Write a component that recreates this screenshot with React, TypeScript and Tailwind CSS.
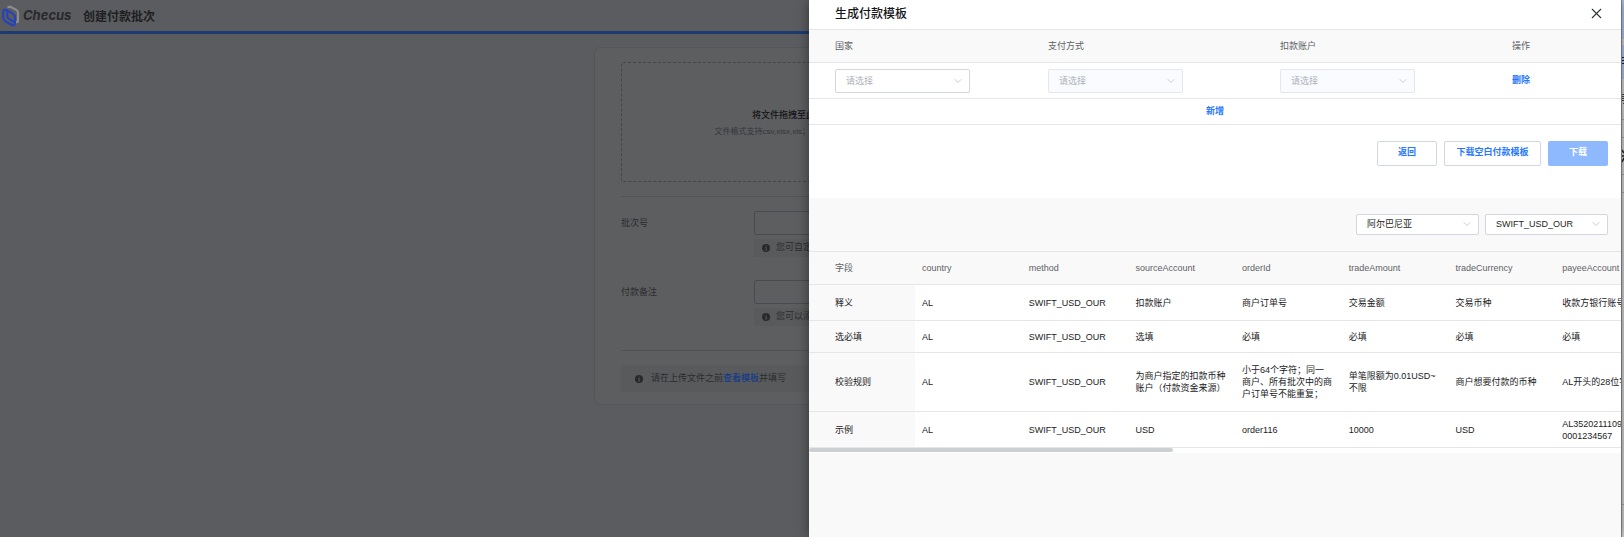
import { X, ChevronDown } from "lucide-react";
import clsx from "clsx";

const fields = [
  "country",
  "method",
  "sourceAccount",
  "orderId",
  "tradeAmount",
  "tradeCurrency",
  "payeeAccount",
];

const rows = [
  {
    label: "释义",
    height: "h-9",
    cells: ["AL", "SWIFT_USD_OUR", "扣款账户", "商户订单号", "交易金额", "交易币种", "收款方银行账号"],
  },
  {
    label: "选必填",
    height: "h-8",
    cells: ["AL", "SWIFT_USD_OUR", "选填", "必填", "必填", "必填", "必填"],
  },
  {
    label: "校验规则",
    height: "h-[59px]",
    cells: [
      "AL",
      "SWIFT_USD_OUR",
      "为商户指定的扣款币种账户（付款资金来源）",
      "小于64个字符；同一\n商户、所有批次中的商\n户订单号不能重复；",
      "单笔限额为0.01USD~\n不限",
      "商户想要付款的币种",
      "AL开头的28位字符",
    ],
  },
  {
    label: "示例",
    height: "h-9",
    cells: ["AL", "SWIFT_USD_OUR", "USD", "order116", "10000", "USD", "AL35202111090000000001234567"],
  },
];

function Logo() {
  return (
    <svg width="18" height="22" viewBox="0 0 18 22" fill="none" aria-hidden="true">
      <path d="M5.500 2.200 L8 1.600 L14.500 5 Q16 6 16 8 V16.500 L13.800 17.500" stroke="#8b8c8f" strokeWidth="2.2" />
      <path
        d="M1.200 7 Q1.200 3.800 4.200 5 L10.500 8.500 Q13 10 13 12.500 V18 Q13 21.500 10 20 L3.500 16.500 Q1.200 15.200 1.200 12.800 Z"
        stroke="#2342bd"
        strokeWidth="2"
      />
      <path d="M5.200 5.500 V11 Q5.200 13 7 14 L12.500 17" stroke="#2342bd" strokeWidth="2" />
    </svg>
  );
}

function InfoIcon() {
  return (
    <svg width="8" height="8" viewBox="0 0 8 8" aria-hidden="true" className="shrink-0">
      <circle cx="4" cy="4" r="4" fill="#28292b" />
      <path d="M3.2 3.4 H4.3 V5.800 M3.1 6 H5.100 M3.700 1.900 H4.500" stroke="#5c5d5f" strokeWidth="0.8" fill="none" />
    </svg>
  );
}

type SelectProps = {
  label: string;
  value: string;
  className?: string;
  disabled?: boolean;
  placeholder?: boolean;
};

function Select({ label, value, className, disabled, placeholder }: SelectProps) {
  return (
    <div className={clsx("relative", className)}>
      <select
        aria-label={label}
        disabled={disabled}
        className={clsx(
          "block h-full w-full appearance-none rounded-xs border pl-2.5 pr-6 pt-px opacity-100",
          disabled ? "border-[#e4e7ed] bg-[#fafbfe]" : "border-[#d4d7e0] bg-white",
          placeholder ? "text-[#aeb1ba]" : "text-[#1d1e20]"
        )}
      >
        <option>{value}</option>
      </select>
      <ChevronDown
        size={12}
        strokeWidth={1.5}
        className="pointer-events-none absolute right-1.5 top-1/2 -translate-y-1/2 text-[#b9bcc5]"
      />
    </div>
  );
}

type FormRowProps = { id: string; label: string; hint: string };

function FormRow({ id, label, hint }: FormRowProps) {
  return (
    <div className="flex">
      <label htmlFor={id} className="w-[133px] shrink-0 pt-1.5 leading-3">
        {label}
      </label>
      <div className="flex-1">
        <input id={id} className="block h-6 w-full rounded-xs border border-[#494b50]" />
        <p className="mt-1 flex h-[18px] items-center gap-1.5 bg-[#595a5c] px-2">
          <InfoIcon />
          {hint}
        </p>
      </div>
    </div>
  );
}

function BatchPage() {
  return (
    <div className="flex min-h-screen flex-1 flex-col bg-[#5b5c5f] text-[#2b2c2f]">
      <header className="flex h-[34px] items-center border-b-3 border-[#1d3b70] pl-0.5">
        <Logo />
        <span className="ml-[3px] w-[60px] font-[Inter] text-[13px] font-bold italic text-[#28292c]">
          Checus
        </span>
        <h1 className="pt-0.5 text-xs font-bold text-[#1e1f21]">创建付款批次</h1>
      </header>
      <main className="mx-auto mt-[13px] w-full max-w-[433px] rounded-md border border-[#555659] bg-[#5d5e60] px-[26px] pb-3 pt-3.5">
        <div className="flex h-[120px] flex-col items-center justify-center gap-1 rounded-xs border border-dashed border-[#454649] pt-[3px]">
          <p className="font-medium text-[#141517]">将文件拖拽至此处或点击上传</p>
          <p className="text-[8px] text-[#35363a]">
            文件格式支持csv,xlsx,xls；单次文件大小不能超过5MB
          </p>
        </div>
        <hr className="my-3.5 border-[#525356]" />
        <FormRow id="batch" label="批次号" hint="您可自定义批次号" />
        <div className="h-[23px]" />
        <FormRow id="remark" label="付款备注" hint="您可以添加付款备注" />
        <hr className="mb-3.5 mt-6 border-[#505154]" />
        <p className="flex h-[27px] items-center bg-[#595a5c] px-3.5">
          <InfoIcon />
          <span className="ml-2">
            请在上传文件之前
            <a href="#template" className="font-medium text-[#163c88]">
              查看模板
            </a>
            并填写
          </span>
        </p>
      </main>
    </div>
  );
}

function TemplateForm() {
  return (
    <table className="w-full table-fixed text-left">
      <colgroup>
        <col className="w-[229px]" />
        <col className="w-[232px]" />
        <col className="w-[232px]" />
        <col />
      </colgroup>
      <thead className="bg-[#f9f9f9] text-[#606266]">
        <tr className="h-8 border-b border-[#e6e6e8]">
          <th className="pl-[26px] pt-0.5 font-normal">国家</th>
          <th className="pl-2.5 pt-0.5 font-normal">支付方式</th>
          <th className="pl-2.5 pt-0.5 font-normal">扣款账户</th>
          <th className="pl-2.5 pt-0.5 font-normal">操作</th>
        </tr>
      </thead>
      <tbody>
        <tr className="h-9 border-b border-[#e6e6e8]">
          <td className="pl-[26px] pt-0.5">
            <Select label="国家" value="请选择" placeholder className="h-6 w-[135px]" />
          </td>
          <td className="pl-2.5 pt-0.5">
            <Select label="支付方式" value="请选择" placeholder disabled className="h-6 w-[135px]" />
          </td>
          <td className="pl-2.5 pt-0.5">
            <Select label="扣款账户" value="请选择" placeholder disabled className="h-6 w-[135px]" />
          </td>
          <td className="pl-2.5 pt-0.5">
            <button className="font-bold text-[#2878ff]">删除</button>
          </td>
        </tr>
        <tr className="h-[26px] border-b border-[#e6e6e8]">
          <td colSpan={4} className="pt-0.5 text-center">
            <button className="font-bold text-[#2878ff]">新增</button>
          </td>
        </tr>
      </tbody>
    </table>
  );
}

function FieldTable() {
  return (
    <div className="overflow-hidden border-t border-[#e6e6e8] bg-white">
      <table className="w-[853px] table-fixed text-left leading-3 text-[#1a1b1d]">
        <colgroup>
          <col className="w-[106px]" />
          {fields.map((field) => (
            <col key={field} />
          ))}
        </colgroup>
        <thead className="bg-[#f9f9f9] text-[#606266]">
          <tr className="h-[33px] border-b border-[#e6e6e8]">
            <th className="pl-[26px] font-normal">字段</th>
            {fields.map((field) => (
              <th key={field} className="px-[7px] font-normal">
                {field}
              </th>
            ))}
          </tr>
        </thead>
        <tbody>
          {rows.map((row) => (
            <tr key={row.label} className={clsx("border-b border-[#e6e6e8]", row.height)}>
              <th className="bg-[#f9f9f9] pl-[26px] font-normal">{row.label}</th>
              {row.cells.map((cell, i) => (
                <td key={fields[i]} className="whitespace-pre-line break-all px-[7px]">
                  {cell}
                </td>
              ))}
            </tr>
          ))}
        </tbody>
      </table>
      <div className="h-[5px]">
        <div className="h-1 w-[364px] rounded-full bg-[#cdd0d3]" />
      </div>
    </div>
  );
}

function Drawer() {
  return (
    <aside
      role="dialog"
      aria-label="生成付款模板"
      className="absolute inset-y-0 right-[3px] w-1/2 overflow-hidden bg-[#f9f9f9] shadow-[0_0_12px_rgba(0,0,0,0.45)]"
    >
      <div className="bg-white pb-8">
        <div className="flex h-[30px] items-center justify-between border-b border-[#e6e6e8] pb-0.5 pl-[26px] pr-4">
          <h2 className="text-xs font-medium text-[#141517]">生成付款模板</h2>
          <button aria-label="关闭" className="text-[#303133]">
            <X size={17} strokeWidth={1.5} />
          </button>
        </div>
        <TemplateForm />
        <div className="mt-4 flex justify-end gap-[7px] pr-[13px] font-bold text-[#2878ff]">
          <button className="h-[25px] w-[60px] rounded-xs border border-[#d4d7e0]">返回</button>
          <button className="h-[25px] w-[97px] rounded-xs border border-[#d4d7e0]">下载空白付款模板</button>
          <button className="h-[25px] w-[60px] rounded-xs bg-[#8fb9ff] text-white">下载</button>
        </div>
      </div>
      <div className="flex justify-end gap-1.5 py-4 pr-[13px]">
        <Select label="国家" value="阿尔巴尼亚" className="h-[21px] w-[123px]" />
        <Select label="支付方式" value="SWIFT_USD_OUR" className="h-[21px] w-[123px]" />
      </div>
      <FieldTable />
    </aside>
  );
}

// sliver of the neighbouring window
function WindowEdge() {
  return (
    <div className="w-[3px] shrink-0 border-l border-[#8d8d8d] bg-[#d0d0d0]">
      <svg width="2" height="537" viewBox="0 0 2 537" aria-hidden="true">
        <path d="M0 0 H2 V39 H0 Z M0 45 H2 V79 H0 Z" fill="#adc1e4" />
        <path d="M0 57.500 H2 M0 60.500 H2 M0 63.500 H2" stroke="#14213d" />
        <path d="M0 94.500 H2 M0 96.500 H2 M0 98.500 H2 M0 100.500 H2 M1 103.500 H2" stroke="#4a4a4a" />
        <path d="M0 150 L2 153 M0 162 L2 158 M0 156 H2" stroke="#222" strokeWidth="1.500" />
        <path d="M0 119.500 H2 M0 137.500 H2 M0 174.500 H2 M0 192.500 H2 M0 504.500 H2" stroke="#a8a8a8" />
      </svg>
    </div>
  );
}

export default function App() {
  return (
    <div className="relative flex min-h-screen overflow-hidden font-['Liberation_Sans','Noto_Sans_CJK_SC',sans-serif] text-[9px]">
      <BatchPage />
      <WindowEdge />
      <Drawer />
    </div>
  );
}
